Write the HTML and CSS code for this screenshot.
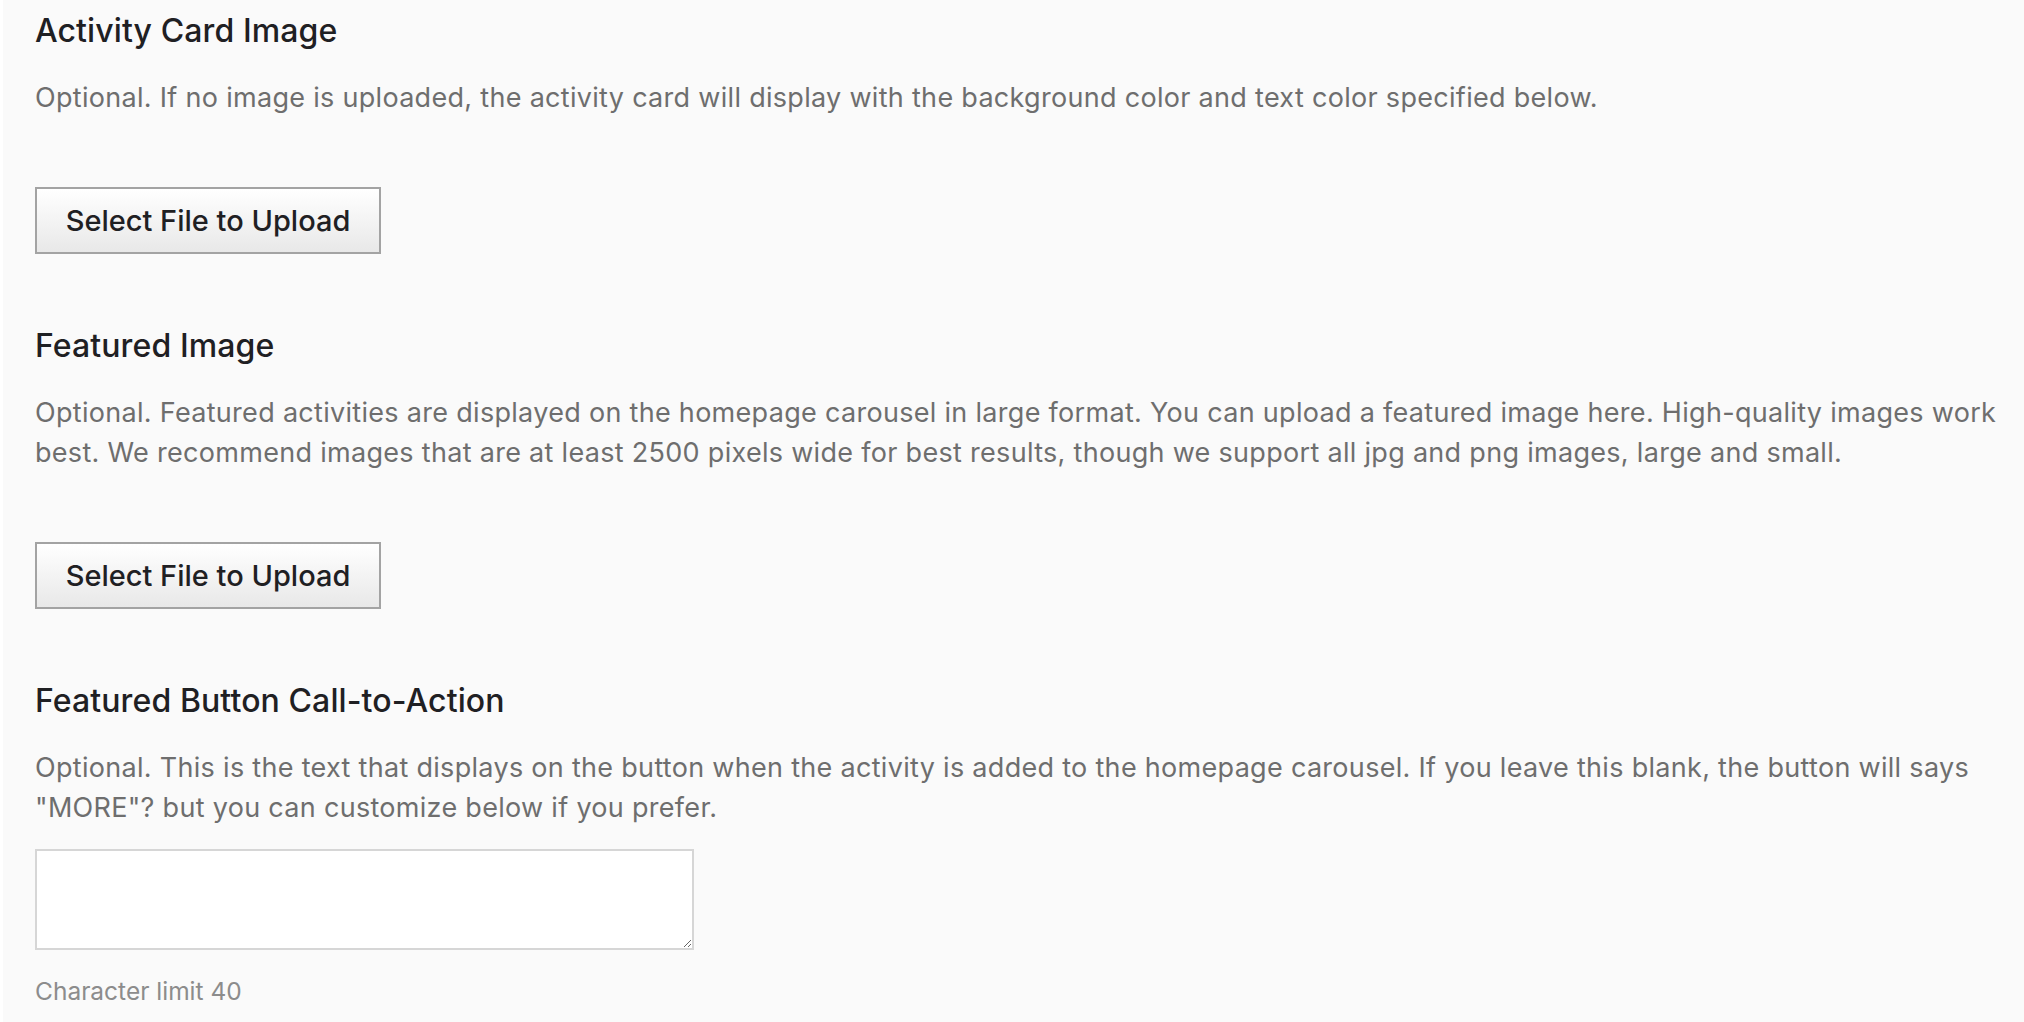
FILE: index.html
```html
<!DOCTYPE html>
<html lang="en">
<head>
<meta charset="utf-8">
<title>Activity Images</title>
<link rel="stylesheet" href="styles.css">
</head>
<body>
<main class="page">
  <section class="field">
    <h2 class="field-title">Activity Card Image</h2>
    <p class="field-help">Optional. If no image is uploaded, the activity card will display with the background color and text color specified below.</p>
    <button class="upload-btn" type="button">Select File to Upload</button>
  </section>
  <section class="field">
    <h2 class="field-title">Featured Image</h2>
    <p class="field-help">Optional. Featured activities are displayed on the homepage carousel in large format. You can upload a featured image here. High-quality images work best. We recommend images that are at least 2500 pixels wide for best results, though we support all jpg and png images, large and small.</p>
    <button class="upload-btn" type="button">Select File to Upload</button>
  </section>
  <section class="field">
    <h2 class="field-title">Featured Button Call-to-Action</h2>
    <p class="field-help">Optional. This is the text that displays on the button when the activity is added to the homepage carousel. If you leave this blank, the button will says "MORE"? but you can customize below if you prefer.</p>
    <textarea class="cta-input"></textarea>
    <div class="char-limit">Character limit 40</div>
  </section>
</main>
</body>
</html>
```
FILE: styles.css
```css
html, body {
  margin: 0;
  padding: 0;
  background: #ffffff;
  height: 100%;
}
body {
  font-family: Inter, "Noto Sans", "Liberation Sans", sans-serif;
  overflow: hidden;
}
.page {
  margin-left: 3px;
  min-height: 100%;
  background: #fafafa;
  padding: 12px 12px 0 32px;
  box-sizing: border-box;
  display: flex;
  flex-direction: column;
  gap: 73px;
}
.field {
  display: flex;
  flex-direction: column;
  align-items: flex-start;
}
.field-title {
  margin: 0 0 28px 0;
  font-size: 32px;
  line-height: 38px;
  font-weight: 500;
  color: #1f2023;
  letter-spacing: 0.1px;
}
.field-help {
  margin: 0;
  font-size: 27px;
  line-height: 40px;
  font-weight: 400;
  color: #6e6e6e;
  letter-spacing: 0.3px;
}
.upload-btn {
  margin-top: 69px;
  width: 346px;
  height: 67px;
  border: 2px solid #a3a3a3;
  border-radius: 0;
  background: linear-gradient(#ffffff, #e8e8e8);
  font-family: inherit;
  font-size: 29px;
  font-weight: 500;
  color: #1f2023;
  padding: 0;
}
.cta-input {
  margin-top: 21px;
  width: 659px;
  height: 101px;
  box-sizing: border-box;
  border: 2px solid #d6d6d6;
  background: #ffffff;
  font-family: inherit;
  font-size: 26px;
}
.char-limit {
  margin-top: 26px;
  font-size: 24.5px;
  line-height: 30px;
  color: #8c8c8c;
}
```
